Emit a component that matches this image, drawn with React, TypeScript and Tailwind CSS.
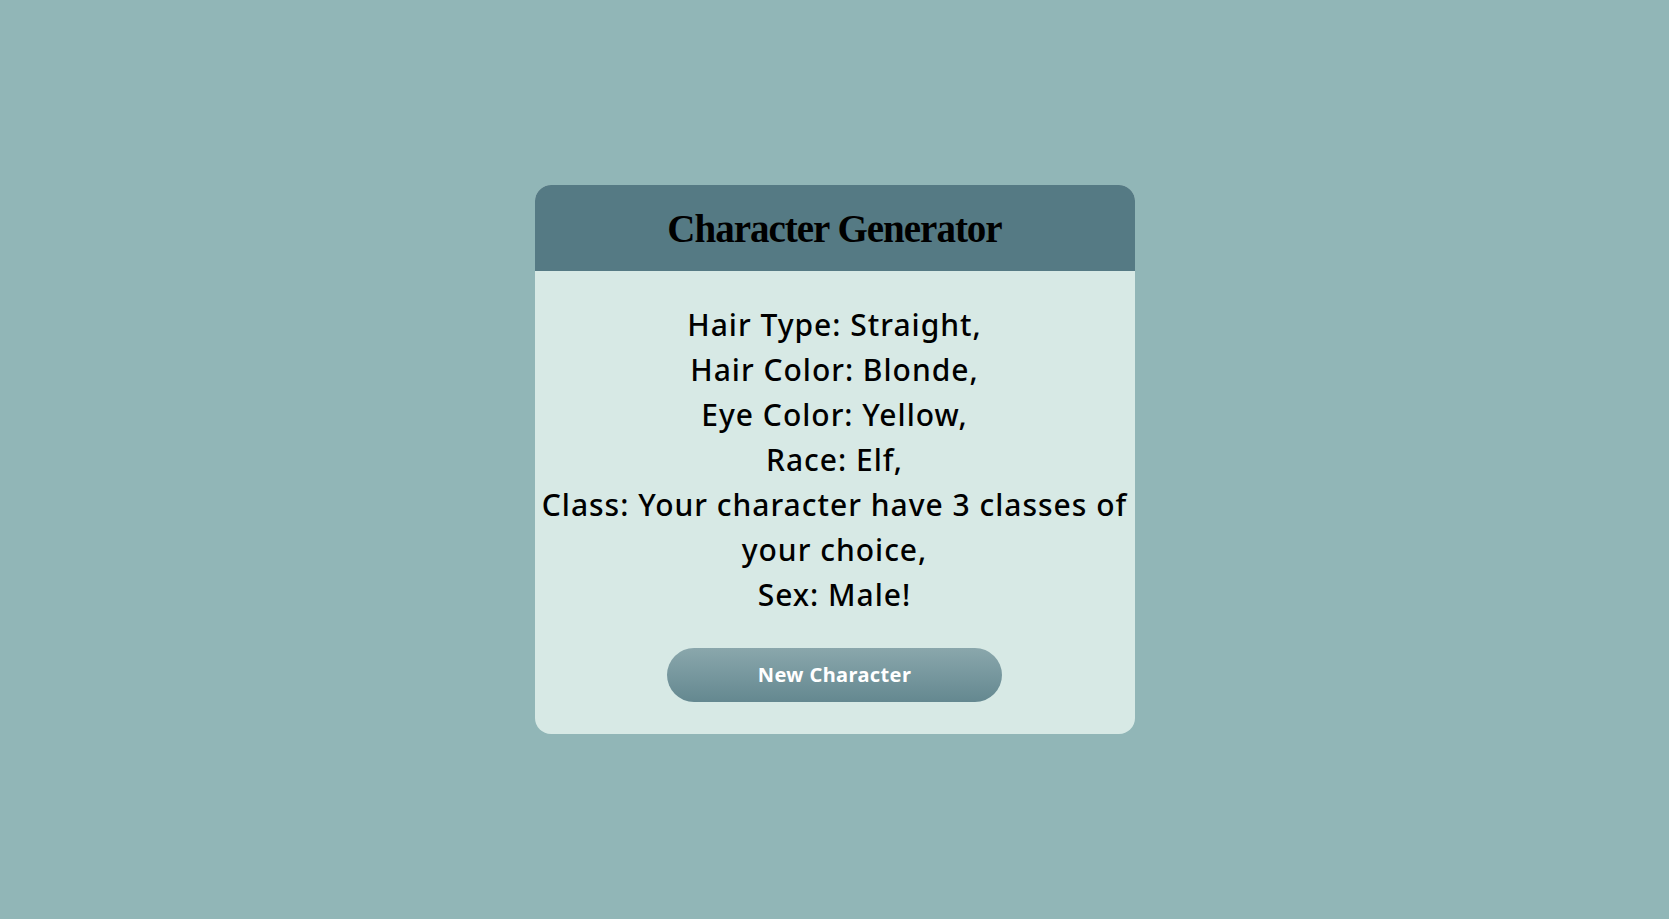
import React from "react";

const lines = [
  "Hair Type: Straight,",
  "Hair Color: Blonde,",
  "Eye Color: Yellow,",
  "Race: Elf,",
  "Class: Your character have 3 classes of",
  "your choice,",
  "Sex: Male!",
];

export default function App() {
  return (
    <div className="min-h-screen w-full bg-[#91b6b7] flex items-center justify-center">
      <div className="w-[600px] rounded-[16px] overflow-hidden bg-[#d7e9e5] flex flex-col items-center">
        <div className="w-full h-[86px] bg-[#557a84] flex items-center justify-center">
          <h1
            className="text-[39px] leading-none font-bold text-black tracking-[-1px]"
            style={{ fontFamily: '"Liberation Serif", "DejaVu Serif", serif' }}
          >
            Character Generator
          </h1>
        </div>
        <div className="w-full flex flex-col items-center pt-[31px] pb-[32px] gap-[31px]">
          <div
            className="text-center text-[30px] leading-[45px] font-medium tracking-[1px] text-black"
            style={{ fontFamily: '"Noto Sans", "DejaVu Sans", sans-serif' }}
          >
            {lines.map((l) => (
              <div key={l}>{l}</div>
            ))}
          </div>
          <button
            className="w-[335px] h-[54px] rounded-full bg-gradient-to-b from-[#8aa7ac] to-[#648890] text-white font-bold text-[20px] tracking-[0.4px]"
            style={{ fontFamily: '"Noto Sans", "DejaVu Sans", sans-serif' }}
          >
            New Character
          </button>
        </div>
      </div>
    </div>
  );
}
